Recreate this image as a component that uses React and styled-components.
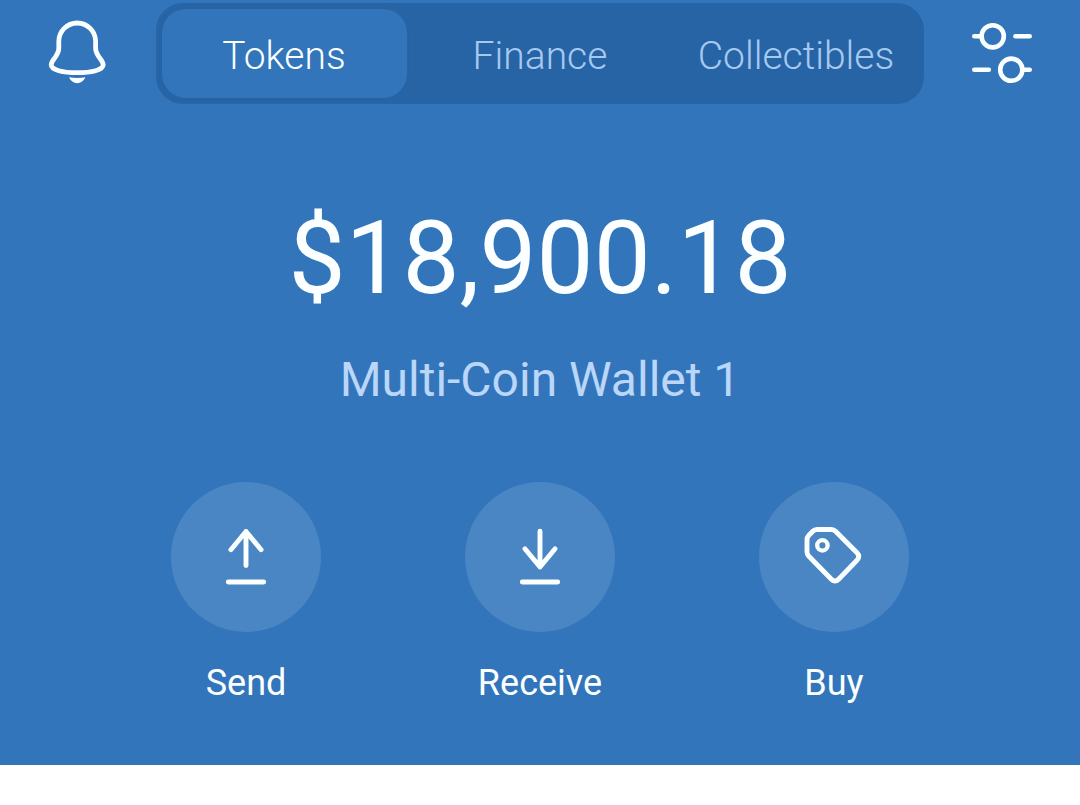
import React, { useState } from "react";
import styled, { createGlobalStyle } from "styled-components";

const colors = {
    primary: "#3275bb",
    track: "#2764a5",
    edge: "#2a69ab",
    circle: "#4a86c3",
    white: "#fbffff",
    muted: "#a6c9f0",
    wallet: "#bad6f8",
};

const tabs = ["Tokens", "Finance", "Collectibles"];

const actions = [
    { id: 1, label: "Send", icon: <SendIcon /> },
    { id: 2, label: "Receive", icon: <ReceiveIcon /> },
    { id: 3, label: "Buy", icon: <TagIcon /> },
];

function BellIcon() {
    return (
        <Icon width="60" height="68" viewBox="0 0 60 68">
            <path
                d="M11.8 23.4a18.4 18.4 0 0 1 36.8 0V30C48.6 38.4 56.2 41.6 56.2 46.8C56.2 52 44.5 54.7 30.2 54.7C16 54.7 4.2 52 4.2 46.8C4.2 41.6 11.8 38.4 11.8 30Z"
                strokeWidth="4.8"
            />
            <path
                d="M22 59.3C27 60.2 33.4 60.2 38.4 59.3C36.8 63 33.8 65.2 30.2 65.2C26.6 65.2 23.6 63 22 59.3Z"
                fill="currentColor"
                stroke="none"
            />
        </Icon>
    );
}

function FilterIcon() {
    return (
        <Icon width="60" height="64" viewBox="0 -2 60 64" strokeWidth="4.6">
            <circle cx="20.7" cy="14.3" r="11.1" />
            <circle cx="39.3" cy="47.7" r="11.1" />
            <path d="M2.3 14.2H8.5M43.4 14.2H57.7M2.3 47.8H16.8M51.5 47.8H57.7" />
        </Icon>
    );
}

function SendIcon() {
    return (
        <Icon width="150" height="150" viewBox="0 0 150 150" strokeWidth="4.9">
            <path d="M75 49.5V83.5M59.9 67.7L75 49.5L90.1 67.7M57.3 100H92.7" />
        </Icon>
    );
}

function ReceiveIcon() {
    return (
        <Icon width="150" height="150" viewBox="0 0 150 150" strokeWidth="4.9">
            <path d="M75 49.3V84M59.9 66.8L75 85L90.1 66.8M57.3 100H92.7" />
        </Icon>
    );
}

function TagIcon() {
    return (
        <Icon width="150" height="150" viewBox="0 0 150 150" strokeWidth="4.9">
            <path d="M58 47.5H72.2Q74.9 47.5 76.8 49.4L98 70.8Q101.6 74.6 98 78.2L79.6 97.2Q76 100.9 72.4 97.2L49.6 74Q48 72.4 48 70V58Q48 55.2 49.7 53.5L53.8 49.3Q55.6 47.5 58 47.5Z" />
            <circle cx="63.4" cy="63.4" r="5.2" strokeWidth="4.3" />
        </Icon>
    );
}

function App() {
    const [active, setActive] = useState("Tokens");
    return (
        <>
            <GlobalStyle />
            <MainContainer>
                <Header>
                    <IconButton aria-label="Notifications">
                        <BellIcon />
                    </IconButton>
                    <TabList>
                        {tabs.map((tab) => (
                            <Tab
                                key={tab}
                                $active={tab === active}
                                onClick={() => setActive(tab)}
                            >
                                {tab}
                            </Tab>
                        ))}
                    </TabList>
                    <IconButton aria-label="Manage tokens">
                        <FilterIcon />
                    </IconButton>
                </Header>
                <Balance>$18,900.18</Balance>
                <WalletName>Multi-Coin Wallet 1</WalletName>
                <ActionList>
                    {actions.map((action) => (
                        <ActionItem key={action.id}>
                            <ActionCircle>{action.icon}</ActionCircle>
                            <ActionLabel>{action.label}</ActionLabel>
                        </ActionItem>
                    ))}
                </ActionList>
            </MainContainer>
        </>
    );
}

const GlobalStyle = createGlobalStyle`
    * {
        margin: 0;
        padding: 0;
        box-sizing: border-box;
    }
    body {
        background-color: #fff;
        font-family: Roboto, "Liberation Sans", sans-serif;
    }
    button {
        border: none;
        background: none;
        color: inherit;
        font-family: inherit;
        cursor: pointer;
    }
`;
const Icon = styled.svg`
    display: block;
    fill: none;
    stroke: currentColor;
    stroke-linecap: round;
    stroke-linejoin: round;
`;
const MainContainer = styled.div`
    width: 1080px;
    height: 765px;
    padding-top: 3px;
    background-color: ${colors.primary};
    color: ${colors.white};
`;
const Header = styled.header`
    display: flex;
    align-items: center;
    justify-content: space-between;
    padding: 0 48px 0 47px;
`;
const IconButton = styled.button`
    display: flex;
    padding-bottom: 3px;
`;
const TabList = styled.nav`
    display: grid;
    grid-template-columns: repeat(3, 1fr);
    width: 768px;
    height: 101px;
    margin-left: 1px;
    border-radius: 27px;
    overflow: hidden;
    background-color: ${colors.track};
`;
const Tab = styled.button`
    margin: 6px 5.5px;
    padding-top: 4px;
    border-radius: 24px;
    background-color: ${({ $active }) =>
        $active ? colors.primary : "transparent"};
    box-shadow: ${({ $active }) =>
        $active
            ? `0 0 0 5px ${colors.track}, 0 0 0 5.6px ${colors.edge}`
            : "none"};
    color: ${({ $active }) => ($active ? colors.white : colors.muted)};
    font-size: 39px;
    font-weight: 300;
    line-height: 46px;
`;
const Balance = styled.h1`
    margin-top: 95px;
    font-size: 101.5px;
    font-weight: 400;
    line-height: 120px;
    text-align: center;
`;
const WalletName = styled.h2`
    margin-top: 33px;
    color: ${colors.wallet};
    font-size: 48px;
    font-weight: 400;
    line-height: 56px;
    text-align: center;
`;
const ActionList = styled.div`
    display: flex;
    justify-content: center;
    gap: 144px;
    margin-top: 74px;
`;
const ActionItem = styled.button`
    display: flex;
    flex-direction: column;
    align-items: center;
    width: 150px;
`;
const ActionCircle = styled.span`
    width: 150px;
    height: 150px;
    border-radius: 50%;
    background-color: ${colors.circle};
`;
const ActionLabel = styled.span`
    margin-top: 30px;
    font-size: 36px;
    line-height: 42px;
`;

export default App;
